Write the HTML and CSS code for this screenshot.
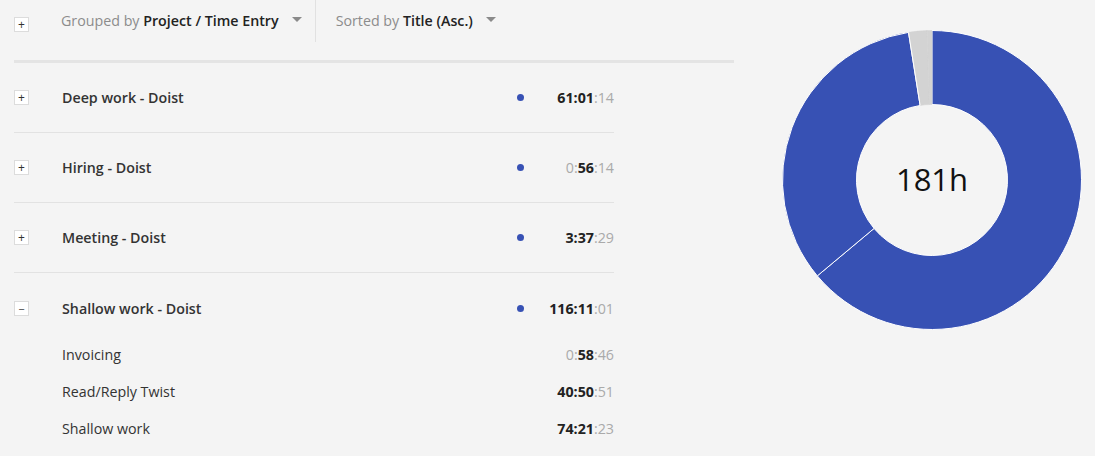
FILE: index.html
```html
<!DOCTYPE html>
<html>
<head>
<meta charset="utf-8">
<link rel="stylesheet" href="styles.css">
</head>
<body>
<div class="page">
  <div class="report">
    <div class="toolbar">
      <span class="toggle">+</span>
      <div class="dropdown first">
        <span class="label">Grouped by <b>Project / Time Entry</b></span>
        <span class="caret"></span>
      </div>
      <div class="dropdown">
        <span class="label">Sorted by <b>Title (Asc.)</b></span>
        <span class="caret"></span>
      </div>
    </div>
    <div class="rule"></div>
    <div class="list">
      <div class="group">
        <div class="row">
          <span class="toggle">+</span>
          <span class="title">Deep work - Doist</span>
          <span class="dot"></span>
          <span class="time"><b>61:01</b>:14</span>
        </div>
      </div>
      <div class="group">
        <div class="row">
          <span class="toggle">+</span>
          <span class="title">Hiring - Doist</span>
          <span class="dot"></span>
          <span class="time">0:<b>56</b>:14</span>
        </div>
      </div>
      <div class="group">
        <div class="row">
          <span class="toggle">+</span>
          <span class="title">Meeting - Doist</span>
          <span class="dot"></span>
          <span class="time"><b>3:37</b>:29</span>
        </div>
      </div>
      <div class="group open">
        <div class="row">
          <span class="toggle minus">&minus;</span>
          <span class="title">Shallow work - Doist</span>
          <span class="dot"></span>
          <span class="time"><b>116:11</b>:01</span>
        </div>
        <div class="children">
          <div class="child"><span class="name">Invoicing</span><span class="time">0:<b>58</b>:46</span></div>
          <div class="child"><span class="name">Read/Reply Twist</span><span class="time"><b>40:50</b>:51</span></div>
          <div class="child"><span class="name">Shallow work</span><span class="time"><b>74:21</b>:23</span></div>
        </div>
      </div>
    </div>
  </div>
  <div class="chart">
    <svg class="donut" width="300" height="300" viewBox="0 0 300 300">
      <path fill="#3751b4" stroke="#ffffff" stroke-width="1" d="M150 0.5 A149.5 149.5 0 1 1 35.30 245.89 L92.07 198.42 A75.5 75.5 0 1 0 150 74.5 Z"/>
      <path fill="#3751b4" stroke="#ffffff" stroke-width="1" d="M35.30 245.89 A149.5 149.5 0 0 1 126.51 2.36 L138.14 75.44 A75.5 75.5 0 0 0 92.07 198.42 Z"/>
      <path fill="#d3d3d3" stroke="#d3d3d3" stroke-width="0.5" d="M126.51 2.36 A149.5 149.5 0 0 1 145.15 0.58 L147.55 74.54 A75.5 75.5 0 0 0 138.14 75.44 Z"/>
      <path fill="#d3d3d3" stroke="#d3d3d3" stroke-width="0.5" d="M145.15 0.58 A149.5 149.5 0 0 1 150 0.5 L150 74.5 A75.5 75.5 0 0 0 147.55 74.54 Z"/>
      <line x1="126.51" y1="2.36" x2="138.14" y2="75.44" stroke="#ffffff" stroke-width="1"/>
      <text x="150" y="161" text-anchor="middle" class="total">181h</text>
    </svg>
  </div>
</div>
</body>
</html>
```

FILE: styles.css
```css
html, body {
  margin: 0;
  padding: 0;
  background: #f4f4f4;
  font-family: "Open Sans", "Liberation Sans", sans-serif;
  font-size: 14.25px;
  color: #333;
}

.page {
  display: flex;
  width: 1095px;
  height: 456px;
  overflow: hidden;
}

.report {
  width: 720px;
  padding-left: 14px;
}

.toolbar {
  display: flex;
  align-items: flex-start;
  height: 42px;
}

.rule {
  height: 3px;
  background: #e4e4e4;
  margin-top: 18px;
}

.toolbar .toggle {
  margin-top: 17px;
}

.toggle {
  display: inline-flex;
  align-items: center;
  justify-content: center;
  width: 13px;
  height: 13px;
  background: #fff;
  border: 1px solid #dcdcdc;
  font-size: 12px;
  line-height: 1;
  color: #333;
  flex: none;
}

.toggle.minus {
  align-items: flex-end;
  font-size: 11px;
  line-height: 13px;
}

.dropdown {
  display: flex;
  align-items: center;
  height: 42px;
  padding-right: 13px;
  border-right: 1px solid #e1e1e1;
}

.dropdown.first {
  margin-left: 32px;
}

.dropdown + .dropdown {
  border-right: none;
  padding-left: 20px;
}

.dropdown .label {
  color: #8c8c8c;
  line-height: 20px;
  margin-top: -1px;
}

.dropdown .label b {
  color: #222;
  font-weight: 600;
}

.caret {
  width: 0;
  height: 0;
  border-left: 5px solid transparent;
  border-right: 5px solid transparent;
  border-top: 5px solid #8a8a8a;
  margin-left: 13px;
  margin-top: -3px;
}

.list {
  width: 600px;
}

.row {
  display: flex;
  align-items: center;
  height: 70px;
  box-sizing: border-box;
  border-bottom: 1px solid #e2e2e2;
}

.group.open .row {
  border-bottom: none;
  height: 63px;
  padding-top: 7px;
}

.row .title {
  flex: 1;
  margin-left: 33px;
  font-weight: 600;
  color: #333;
}

.dot {
  width: 7px;
  height: 7px;
  border-radius: 50%;
  background: #3751b4;
  margin-right: 10px;
  flex: none;
}

.time {
  width: 80px;
  text-align: right;
  color: #aaa;
  flex: none;
}

.time b {
  color: #222;
  font-weight: 700;
}

.child {
  display: flex;
  align-items: center;
  height: 37px;
}

.child .name {
  flex: 1;
  margin-left: 48px;
  color: #333;
}

.chart {
  flex: 1;
  padding-left: 48px;
  padding-top: 30px;
}

.donut {
  display: block;
}

.total {
  font-family: "Open Sans", "Liberation Sans", sans-serif;
  font-size: 31px;
  fill: #111;
}
```
